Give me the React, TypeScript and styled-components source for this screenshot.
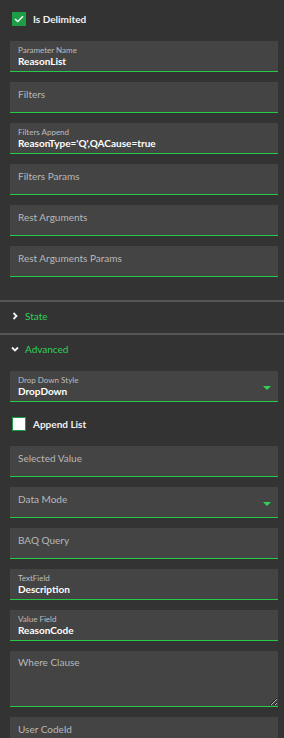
import React from "react";
import styled, { createGlobalStyle } from "styled-components";

type FieldData = {
  label: string;
  value?: string;
  select?: boolean;
};

const GlobalStyle = createGlobalStyle`
  html, body {
    margin: 0;
    padding: 0;
    background: #333333;
  }
  body {
    font-family: Lato, "Liberation Sans", sans-serif;
    color: #ffffff;
  }
`;

const topFields: FieldData[] = [
  { label: "Parameter Name", value: "ReasonList" },
  { label: "Filters" },
  { label: "Filters Append", value: "ReasonType='Q',QACause=true" },
  { label: "Filters Params" },
  { label: "Rest Arguments" },
  { label: "Rest Arguments Params" },
];

const advancedA: FieldData[] = [{ label: "Drop Down Style", value: "DropDown", select: true }];

const advancedB: FieldData[] = [
  { label: "Selected Value" },
  { label: "Data Mode", select: true },
  { label: "BAQ Query" },
  { label: "TextField", value: "Description" },
  { label: "Value Field", value: "ReasonCode" },
];

function Field({ label, value, select }: FieldData) {
  return (
    <FieldBox>
      {value ? (
        <>
          <SmallLabel>{label}</SmallLabel>
          <Value>{value}</Value>
        </>
      ) : (
        <Placeholder>{label}</Placeholder>
      )}
      {select && <Caret />}
    </FieldBox>
  );
}

function Check({ checked, label }: { checked: boolean; label: string }) {
  return (
    <CheckRow>
      <Box checked={checked}>
        {checked && (
          <svg width="10" height="8" viewBox="0 0 10 8">
            <path d="M1 4 L3.8 6.6 L9 1.2" fill="none" stroke="#fff" strokeWidth="1.4" />
          </svg>
        )}
      </Box>
      <CheckText>{label}</CheckText>
    </CheckRow>
  );
}

function Chevron({ open }: { open: boolean }) {
  return (
    <ChevronSvg width="8" height="8" viewBox="0 0 8 8">
      <path
        d={open ? "M1 2.5 L4 5.5 L7 2.5" : "M2.5 1 L5.5 4 L2.5 7"}
        fill="none"
        stroke="#f2f2f2"
        strokeWidth="1.8"
      />
    </ChevronSvg>
  );
}

export default function App() {
  return (
    <>
      <GlobalStyle />
      <Panel>
        <Group>
          <Check checked label="Is Delimited" />
          {topFields.map((f) => (
            <Field key={f.label} {...f} />
          ))}
        </Group>
        <Section>
          <Header>
            <Chevron open={false} />
            <HeaderText>State</HeaderText>
          </Header>
        </Section>
        <Section>
          <Header>
            <Chevron open />
            <HeaderText>Advanced</HeaderText>
          </Header>
          <Group>
            {advancedA.map((f) => (
              <Field key={f.label} {...f} />
            ))}
            <Check checked={false} label="Append List" />
            {advancedB.map((f) => (
              <Field key={f.label} {...f} />
            ))}
            <Area placeholder="Where Clause" />
            <Field label="User CodeId" />
          </Group>
        </Section>
      </Panel>
    </>
  );
}

const Panel = styled.div`
  width: 284px;
  min-height: 738px;
  overflow: hidden;
`;

const Group = styled.div`
  display: flex;
  flex-direction: column;
  gap: 10px;
  padding: 7px 6px 23px 10px;
`;

const Section = styled.div`
  border-top: 2px solid #565656;
  ${Group} {
    padding-top: 5px;
  }
`;

const Header = styled.div`
  display: flex;
  align-items: center;
  box-sizing: border-box;
  height: 31px;
  padding: 0 0 3px 11px;
  gap: 6px;
`;

const ChevronSvg = styled.svg`
  flex: none;
`;

const HeaderText = styled.span`
  color: #2fd158;
  font-size: 10px;
`;

const FieldBox = styled.div`
  position: relative;
  height: 30px;
  background: #444444;
  border-bottom: 1px solid #22cc4a;
  padding: 0 8px;
  display: flex;
  flex-direction: column;
  justify-content: flex-start;
  box-sizing: content-box;
`;

const SmallLabel = styled.div`
  color: #bdbdbd;
  font-size: 8px;
  line-height: 10px;
  margin-top: 4px;
`;

const Value = styled.div`
  color: #ffffff;
  font-size: 10px;
  font-weight: 700;
  line-height: 13px;
`;

const Placeholder = styled.div`
  color: #b8b8b8;
  font-size: 10px;
  line-height: 13px;
  margin-top: 6px;
`;

const Caret = styled.span`
  position: absolute;
  right: 7px;
  top: 15px;
  width: 0;
  height: 0;
  border-left: 4px solid transparent;
  border-right: 4px solid transparent;
  border-top: 4px solid #2fd158;
`;

const Area = styled.textarea`
  display: block;
  height: 56px;
  background: #444444;
  border: none;
  border-bottom: 1px solid #22cc4a;
  padding: 5px 8px;
  box-sizing: border-box;
  color: #fff;
  font-family: Lato, "Liberation Sans", sans-serif;
  font-size: 10px;
  outline: none;
  color-scheme: dark;
  &::placeholder {
    color: #b8b8b8;
  }
`;

const CheckRow = styled.div`
  display: flex;
  align-items: center;
  height: 24px;
  padding-left: 2px;
  gap: 7px;
`;

const Box = styled.span<{ checked: boolean }>`
  width: 14px;
  height: 14px;
  box-sizing: border-box;
  display: flex;
  align-items: center;
  justify-content: center;
  background: ${({ checked }) => (checked ? "#1e9e44" : "#ffffff")};
  border: 1px solid #1e9e44;
`;

const CheckText = styled.span`
  font-size: 10px;
  font-weight: 700;
  color: #f0f0f0;
`;
